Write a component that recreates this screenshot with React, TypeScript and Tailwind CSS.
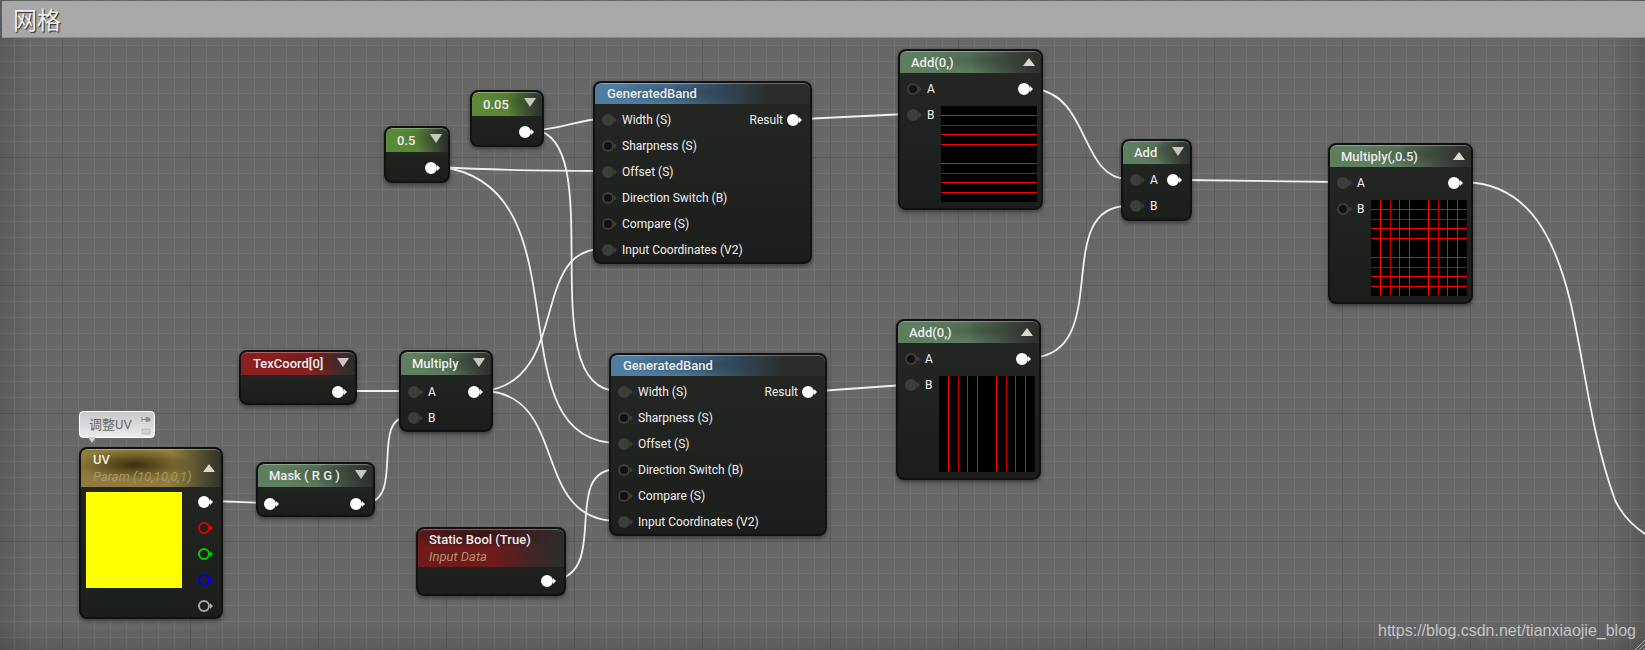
const font = "font-['Roboto','Noto_Sans_CJK_SC',sans-serif]";

type PinKind = "out" | "linked" | "open" | "red" | "green" | "blue" | "grey";

const ringClass: Record<PinKind, string> = {
  out: "bg-white border-white",
  linked: "bg-[#3c3e3c] border-[#3c3e3c]",
  open: "bg-[#111211] border-[#3c3e3c]",
  red: "bg-transparent border-[#e00000]",
  green: "bg-transparent border-[#00d000]",
  blue: "bg-transparent border-[#0000e0]",
  grey: "bg-transparent border-[#a8a8a8]",
};

const arrowClass: Record<PinKind, string> = {
  out: "border-l-white",
  linked: "border-l-[#3c3e3c]",
  open: "border-l-[#3c3e3c]",
  red: "border-l-[#e00000]",
  green: "border-l-[#00d000]",
  blue: "border-l-[#0000e0]",
  grey: "border-l-[#a8a8a8]",
};

function Pin({ kind }: { kind: PinKind }) {
  return (
    <span className="flex items-center shrink-0 w-[15px]">
      <span className={`w-[12px] h-[12px] rounded-full border-2 ${ringClass[kind]}`} />
      <span className={`w-0 h-0 border-y-[3px] border-y-transparent border-l-[3px] ${arrowClass[kind]}`} />
    </span>
  );
}

function Row({ name, pin = "linked" }: { name: string; pin?: PinKind }) {
  return (
    <div className="flex items-center h-[26px] gap-[5px] text-[12px] text-[#f0f0f0]">
      <Pin kind={pin} />
      <span>{name}</span>
    </div>
  );
}

type Tone = "plain" | "const" | "coord" | "band" | "param" | "bool";

const toneClass: Record<Tone, string> = {
  plain:
    "pl-[11px] bg-[radial-gradient(ellipse_45%_60%_at_60%_40%,rgba(30,40,30,0.35),transparent),linear-gradient(90deg,#5e7e60_0%,#5e7e60_50%,#3a3f3a_85%,#2b2e2b_100%)]",
  const:
    "pl-[11px] bg-[radial-gradient(ellipse_50%_60%_at_65%_40%,rgba(30,50,20,0.25),transparent),linear-gradient(90deg,#5b8a37_0%,#5b8a37_50%,#3a4535_85%,#2b2e2b_100%)]",
  coord:
    "pl-[12px] bg-[radial-gradient(ellipse_50%_60%_at_60%_40%,rgba(40,20,20,0.25),transparent),linear-gradient(90deg,#8b1f20_0%,#8b1f20_60%,#4a2a2a_85%,#2b2e2b_100%)]",
  band:
    "pl-[12px] bg-[radial-gradient(ellipse_32%_60%_at_38%_45%,rgba(20,35,50,0.45),transparent),linear-gradient(90deg,#4f7c9f_0%,#4f7c9f_35%,#33495a_60%,#2b2e2b_80%)]",
  param:
    "pl-[12px] bg-[radial-gradient(ellipse_42%_40%_at_38%_42%,rgba(45,35,5,0.85),transparent),linear-gradient(90deg,#8f7b3b_0%,#8f7b3b_65%,#55502f_85%,#2f312c_100%)]",
  bool:
    "pl-[11px] bg-[radial-gradient(ellipse_60%_40%_at_40%_15%,rgba(30,20,20,0.75),transparent),linear-gradient(90deg,#701a1b_0%,#701a1b_50%,#402627_80%,#2b2e2b_100%)]",
};

function Node({
  x,
  y,
  w,
  h,
  head,
  tone,
  title,
  sub,
  arrow,
  children,
}: {
  x: number;
  y: number;
  w: number;
  h: number;
  head: number;
  tone: Tone;
  title: string;
  sub?: string;
  arrow?: "up" | "down";
  children: React.ReactNode;
}) {
  return (
    <div
      className="absolute flex flex-col rounded-[8px] border-[2px] border-[#101110] bg-gradient-to-b from-[#252725] to-[#1c1e1c] shadow-[0_2px_4px_rgba(0,0,0,0.45)] overflow-hidden"
      style={{ left: x, top: y, width: w, height: h }}
    >
      <div
        className={`flex items-center justify-between shrink-0 pr-[6px] rounded-t-[6px] shadow-[inset_0_1px_0_rgba(255,255,255,0.3)] ${toneClass[tone]}`}
        style={{ height: head - 1 }}
      >
        <div className="flex flex-col">
          <span className="text-[13px] font-medium leading-[17px] text-[#ededed]">{title}</span>
          {sub && <span className="text-[13px] italic leading-[17px] text-[#a5966c]">{sub}</span>}
        </div>
        {arrow === "down" && (
          <span className="w-0 h-0 border-x-[6px] border-x-transparent border-t-[9px] border-t-[#c8c8c0] mb-[3px]" />
        )}
        {arrow === "up" && (
          <span className="w-0 h-0 border-x-[6px] border-x-transparent border-b-[8px] border-b-[#d8d8d0]" />
        )}
      </div>
      {children}
    </div>
  );
}

function Bands({ horizontal, vertical }: { horizontal?: boolean; vertical?: boolean }) {
  const at = [9, 19, 28, 38, 57, 67, 76, 86];
  return (
    <svg width="96" height="96" className="block shrink-0" shapeRendering="crispEdges">
      <rect width="96" height="96" fill="#000" />
      {horizontal &&
        at.map((p, i) => <rect key={p} x="0" y={p} width="96" height="1" fill={i % 4 === 1 ? "#c00000" : "#ff0000"} />)}
      {vertical &&
        at.map((p, i) => <rect key={p} x={p} y="0" width="1" height="96" fill={i % 4 === 1 ? "#c80000" : "#ff0000"} />)}
    </svg>
  );
}

function OutRow({ label }: { label?: string }) {
  return (
    <div className="flex items-center justify-end h-[26px] gap-[4px] pr-[8px] text-[12px] text-[#f0f0f0]">
      {label && <span>{label}</span>}
      <Pin kind="out" />
    </div>
  );
}

function Band({ x, y, w }: { x: number; y: number; w: number }) {
  return (
    <Node x={x} y={y} w={w} h={183} head={22} tone="band" title="GeneratedBand">
      <div className="relative pt-[2.5px] pl-[7px]">
        <div className="flex items-center justify-between">
          <Row name="Width (S)" />
          <OutRow label="Result" />
        </div>
        <Row name="Sharpness (S)" pin="open" />
        <Row name="Offset (S)" />
        <Row name="Direction Switch (B)" pin="open" />
        <Row name="Compare (S)" pin="open" />
        <Row name="Input Coordinates (V2)" />
      </div>
    </Node>
  );
}

function Stacked({
  x,
  y,
  title,
  a = "linked",
  b = "linked",
  bands,
}: {
  x: number;
  y: number;
  title: string;
  a?: PinKind;
  b?: PinKind;
  bands: { horizontal?: boolean; vertical?: boolean };
}) {
  return (
    <Node x={x} y={y} w={145} h={161} head={23} tone="plain" title={title} arrow="up">
      <div className="pt-[3px] pl-[7px]">
        <div className="flex items-center justify-between h-[26px]">
          <Row name="A" pin={a} />
          <OutRow />
        </div>
        <div className="flex items-start justify-between pr-[4px]">
          <Row name="B" pin={b} />
          <div className="mt-[4px]">
            <Bands {...bands} />
          </div>
        </div>
      </div>
    </Node>
  );
}

const wires = [
  "M535 130 C560 130 580 119 602 119",
  "M535 130 C610 140 530 391 618 391",
  "M441 167 C490 170 540 171 602 171",
  "M441 167 C590 185 490 443 618 443",
  "M485 391 C570 380 530 249 602 249",
  "M485 391 C570 395 530 521 618 521",
  "M556 580 C610 570 560 469 618 469",
  "M350 391 L408 391",
  "M366 503 C405 500 370 417 408 417",
  "M213 501 L263 503",
  "M803 119 L906 114",
  "M819 391 L904 385",
  "M1035 89 C1090 95 1080 179 1128 179",
  "M1032 358 C1115 352 1050 206 1128 206",
  "M1184 180 L1336 182",
  "M1465 182 C1530 184 1555 240 1570 300 C1585 365 1590 430 1615 500 C1622 515 1633 527 1650 537",
];

export default function App() {
  return (
    <div className={`relative w-[1645px] h-[650px] overflow-hidden bg-[#676767] ${font}`}>
      {/* graph grid, major lines every 128px on top of minor every 16px */}
      <div className="absolute inset-0 bg-[linear-gradient(90deg,#5b5b5b_1px,transparent_1px),linear-gradient(#5b5b5b_1px,transparent_1px),linear-gradient(90deg,#727272_1px,transparent_1px),linear-gradient(#727272_1px,transparent_1px)] bg-[size:128px_128px,128px_128px,16px_16px,16px_16px] bg-[position:62px_29px,62px_29px,14px_13px,14px_13px]" />
      {/* vignette at the edges */}
      <div className="absolute inset-0 bg-[linear-gradient(90deg,rgba(0,0,0,0.12),transparent_36px,transparent_calc(100%-36px),rgba(0,0,0,0.12)),linear-gradient(0deg,rgba(0,0,0,0.12),transparent_26px)]" />

      <div className="absolute left-[2px] right-0 top-[1px] h-[37px] flex items-center pl-[11px] pt-[3px] bg-[#a8a8a8] border-b border-[#8c8c8c] text-[24px] text-[#f0f0f0] [text-shadow:1px_1px_1px_#222]">
        网格
      </div>

      <svg className="absolute inset-0" width="1645" height="650" fill="none" stroke="#f0f0f0" strokeWidth="1.8">
        {wires.map((d) => (
          <path key={d} d={d} />
        ))}
      </svg>

      <Node x={384} y={126} w={66} h={57} head={25} tone="const" title="0.5" arrow="down">
        <div className="pt-[3px]">
          <OutRow />
        </div>
      </Node>
      <Node x={470} y={90} w={74} h={57} head={25} tone="const" title="0.05" arrow="down">
        <div className="pt-[3px]">
          <OutRow />
        </div>
      </Node>
      <Band x={593} y={81} w={219} />
      <Band x={609} y={353} w={218} />

      <Stacked x={898} y={49} title="Add(0,)" a="open" bands={{ horizontal: true }} />
      <Stacked x={896} y={319} title="Add(0,)" a="open" bands={{ vertical: true }} />

      <Node x={1121} y={139} w={71} h={82} head={24} tone="plain" title="Add" arrow="down">
        <div className="relative pt-[3px] pl-[7px]">
          <div className="flex items-center justify-between h-[26px]">
            <Row name="A" />
            <OutRow />
          </div>
          <Row name="B" />
        </div>
      </Node>

      <Node x={1328} y={143} w={145} h={161} tone="plain" head={23} title="Multiply(,0.5)" arrow="up">
        <div className="pt-[3px] pl-[7px]">
          <div className="flex items-center justify-between h-[26px]">
            <Row name="A" />
            <OutRow />
          </div>
          <div className="flex items-start justify-between pr-[4px]">
            <Row name="B" pin="open" />
            <div className="mt-[4px]">
              <Bands horizontal vertical />
            </div>
          </div>
        </div>
      </Node>

      <Node x={239} y={350} w={118} h={55} head={24} tone="coord" title="TexCoord[0]" arrow="down">
        <div className="pt-[4px]">
          <OutRow />
        </div>
      </Node>

      <Node x={399} y={350} w={94} h={82} head={24} tone="plain" title="Multiply" arrow="down">
        <div className="pt-[4px] pl-[7px]">
          <div className="flex items-center justify-between h-[26px]">
            <Row name="A" />
            <OutRow />
          </div>
          <Row name="B" />
        </div>
      </Node>

      <Node x={256} y={462} w={119} h={55} head={24} tone="plain" title="Mask ( R G )" arrow="down">
        <div className="flex items-center justify-between pt-[4px] pl-[6px]">
          <Pin kind="out" />
          <OutRow />
        </div>
      </Node>

      {/* comment bubble above the UV node */}
      <div className="absolute left-[79px] top-[411px] w-[76px] h-[27px] flex items-center pl-[9px] pt-[1px] rounded-[4px] border border-white bg-gradient-to-b from-[#c8c8c8] to-[#ececec] text-[13px] text-[#666]">
        调整UV
        <svg className="absolute right-[3px] top-[3px]" width="10" height="20" viewBox="0 0 10 20">
          <path d="M1 2v5M1 4.5h4M5 2.5v4l4-.7V3.2z" stroke="#8a8a8a" fill="#8a8a8a" strokeWidth="1" />
          <rect x="1" y="14" width="8" height="5" fill="#c8d4e0" stroke="#9a9a9a" strokeWidth="0.5" />
        </svg>
        <span className="absolute left-[8px] bottom-[-6px] w-0 h-0 border-x-[4px] border-x-transparent border-t-[6px] border-t-[#d0d0d0]" />
      </div>

      <Node x={79} y={447} w={144} h={172} head={39} tone="param" title="UV" sub="Param (10,10,0,1)" arrow="up">
        <div className="flex justify-between pl-[5px] pt-[5px] pr-[8px]">
          <div className="w-24 h-24 bg-[#ffff00]" />
          <div className="flex flex-col items-end -mt-[3px]">
            <OutPin kind="out" />
            <OutPin kind="red" />
            <OutPin kind="green" />
            <OutPin kind="blue" />
            <OutPin kind="grey" />
          </div>
        </div>
      </Node>

      <Node x={416} y={527} w={150} h={69} head={39} tone="bool" title="Static Bool (True)" sub="Input Data">
        <div className="pt-[1px]">
          <OutRow />
        </div>
      </Node>

      <span className="absolute left-[1378px] top-[622px] text-[16px] leading-[18px] font-['Liberation_Sans',sans-serif] text-[#c4c4c4]">
        https://blog.csdn.net/tianxiaojie_blog
      </span>
      <svg className="absolute right-0 bottom-0" width="12" height="12" stroke="#b0b0b0" strokeWidth="1">
        <path d="M12 2L2 12M12 6L6 12M12 10L10 12" />
      </svg>
    </div>
  );
}

function OutPin({ kind }: { kind: PinKind }) {
  return (
    <div className="flex items-center h-[26px]">
      <Pin kind={kind} />
    </div>
  );
}
